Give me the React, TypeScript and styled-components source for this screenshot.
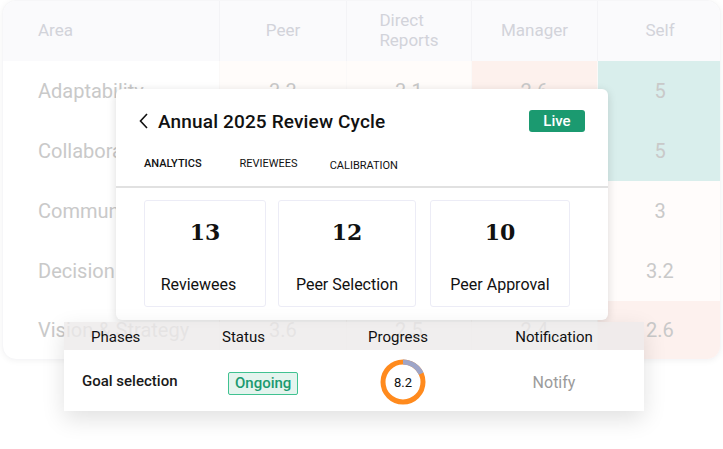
import React from 'react';
import styled, { createGlobalStyle } from 'styled-components';

const GlobalStyle = createGlobalStyle`
  html, body {
    margin: 0;
    padding: 0;
    background: #ffffff;
    font-family: Roboto, 'Liberation Sans', sans-serif;
  }
  * {
    box-sizing: border-box;
  }
`;

type Score = { value: string; tint?: string };
type Row = { area: string; scores: Score[] };

const rows: Row[] = [
  {
    area: 'Adaptability',
    scores: [
      { value: '3.3', tint: '#fffcfa' },
      { value: '3.1', tint: '#fffcfa' },
      { value: '2.6', tint: '#fdf1ed' },
      { value: '5', tint: '#d9eeec' },
    ],
  },
  {
    area: 'Collaboration',
    scores: [{ value: '3.4' }, { value: '3.3' }, { value: '3.0' }, { value: '5', tint: '#d9eeec' }],
  },
  {
    area: 'Communication',
    scores: [{ value: '3.2' }, { value: '3.0' }, { value: '2.9' }, { value: '3', tint: '#fffcfb' }],
  },
  {
    area: 'Decision Making',
    scores: [{ value: '3.1' }, { value: '2.8' }, { value: '2.7' }, { value: '3.2', tint: '#fffcfb' }],
  },
  {
    area: 'Vision & Strategy',
    scores: [{ value: '3.6' }, { value: '2.5' }, { value: '2.4' }, { value: '2.6', tint: '#fdf1ee' }],
  },
];

// shift > 0 pulls the label left (reference labels sit a bit off-centre)
const stats = [
  { value: 13, label: 'Reviewees', width: 122, offset: 0, shift: 13 },
  { value: 12, label: 'Peer Selection', width: 138, offset: 12, shift: 0 },
  { value: 10, label: 'Peer Approval', width: 140, offset: 14, shift: 0 },
];

const ProgressRing = ({ score }: { score: number }) => {
  const r = 20;
  const c = 2 * Math.PI * r;
  const rest = c * (1 - score / 10);
  return (
    <RingWrap>
      <svg width="46" height="46" viewBox="0 0 46 46">
        <circle cx="23" cy="23" r={r} fill="none" stroke="#ff8a1d" strokeWidth="5" />
        <circle
          cx="23"
          cy="23"
          r={r}
          fill="none"
          stroke="#9ea5c8"
          strokeWidth="5"
          strokeDasharray={`${rest} ${c}`}
          transform="rotate(-90 23 23)"
        />
      </svg>
      <RingLabel>{score}</RingLabel>
    </RingWrap>
  );
};

const App = () => {
  return (
    <Page>
      <GlobalStyle />
      <Board>
        <HeadCell $align="left">Area</HeadCell>
        <HeadCell>Peer</HeadCell>
        <HeadCell>
          Direct
          <br />
          Reports
        </HeadCell>
        <HeadCell>Manager</HeadCell>
        <HeadCell>Self</HeadCell>
        {rows.map((row, idx) => (
          <React.Fragment key={idx}>
            <AreaCell>{row.area}</AreaCell>
            {row.scores.map((s, i) => (
              <ScoreCell key={i} $tint={s.tint}>
                {s.value}
              </ScoreCell>
            ))}
          </React.Fragment>
        ))}
      </Board>

      <Panel>
        <PanelHead>
          <TitleRow>
            <Title>
              <svg width="12" height="18" viewBox="0 0 12 18">
                <path d="M9 2 L2.5 9 L9 16" fill="none" stroke="#111" strokeWidth="1.6" />
              </svg>
              Annual 2025 Review Cycle
            </Title>
            <LiveBadge>Live</LiveBadge>
          </TitleRow>
          <Tabs>
            <Tab $active>ANALYTICS</Tab>
            <Tab>REVIEWEES</Tab>
            <Tab $drop>CALIBRATION</Tab>
          </Tabs>
        </PanelHead>
        <StatRow>
          {stats.map((s) => (
            <StatCard key={s.label} $width={s.width} $offset={s.offset}>
              <StatValue>{s.value}</StatValue>
              <StatLabel $shift={s.shift}>{s.label}</StatLabel>
            </StatCard>
          ))}
        </StatRow>
      </Panel>

      <PhaseCard>
        <PhaseHead>
          <PhaseCell $pl={27}>Phases</PhaseCell>
          <PhaseCell $pl={22}>Status</PhaseCell>
          <PhaseCell $center $pr={10}>Progress</PhaseCell>
          <PhaseCell $center $pr={20}>Notification</PhaseCell>
        </PhaseHead>
        <PhaseBody>
          <PhaseCell $pl={18}>
            <PhaseName>Goal selection</PhaseName>
          </PhaseCell>
          <PhaseCell $pl={28}>
            <StatusBadge>Ongoing</StatusBadge>
          </PhaseCell>
          <PhaseCell $center>
            <ProgressRing score={8.2} />
          </PhaseCell>
          <PhaseCell $center $pr={20}>
            <NotifyText>Notify</NotifyText>
          </PhaseCell>
        </PhaseBody>
      </PhaseCard>
    </Page>
  );
};

export default App;

const Page = styled.div`
  position: relative;
  width: 723px;
  height: 449px;
  padding: 0 2px;
  overflow: hidden;
`;

const Board = styled.div`
  display: grid;
  grid-template-columns: 216px 127px 125px 126px 125px;
  grid-template-rows: 60px repeat(4, 60px) 58px;
  border-radius: 14px;
  overflow: hidden;
  background: #ffffff;
  box-shadow: 0 1px 6px rgba(0, 0, 0, 0.05);
  border: 1px solid #f6f6f8;
`;

const HeadCell = styled.div<{ $align?: string }>`
  display: flex;
  align-items: center;
  justify-content: ${(p) => (p.$align === 'left' ? 'flex-start' : 'center')};
  padding-left: ${(p) => (p.$align === 'left' ? '35px' : '0')};
  padding-bottom: 2px;
  background: #fafafc;
  border-left: 1px solid #f3f3f6;
  color: #d2d3da;
  font-size: 17px;
  line-height: 20px;
  text-align: left;

  &:first-child {
    border-left: none;
  }
`;

const AreaCell = styled.div`
  display: flex;
  align-items: center;
  padding-left: 35px;
  color: #c9c9c9;
  font-size: 20px;
  white-space: nowrap;
`;

const ScoreCell = styled.div<{ $tint?: string }>`
  display: flex;
  align-items: center;
  justify-content: center;
  background: ${(p) => p.$tint || '#ffffff'};
  color: #c9c9c9;
  font-size: 20px;
  border-left: 1px solid #fbf9f8;
`;

const Panel = styled.div`
  position: absolute;
  left: 116px;
  top: 89px;
  width: 492px;
  height: 231px;
  background: #ffffff;
  border-radius: 6px;
  box-shadow: 0 2px 10px rgba(0, 0, 0, 0.14);
  overflow: hidden;
`;

const PanelHead = styled.div`
  height: 99px;
  padding: 20px 22px 0 22px;
  border-bottom: 2px solid #e1e1e1;
`;

const TitleRow = styled.div`
  display: flex;
  align-items: center;
  justify-content: space-between;
  height: 24px;
`;

const Title = styled.div`
  display: flex;
  align-items: center;
  gap: 8px;
  color: #111111;
  font-size: 19px;
  font-weight: 500;
  letter-spacing: 0.15px;
`;

const LiveBadge = styled.div`
  width: 56px;
  height: 22px;
  margin-right: 1px;
  border-radius: 3px;
  background: #1b9a70;
  color: #ffffff;
  font-size: 15px;
  font-weight: 500;
  display: flex;
  align-items: center;
  justify-content: center;
`;

const Tabs = styled.div`
  display: flex;
  align-items: flex-start;
  gap: 38px;
  margin-top: 24px;
  padding-left: 6px;
`;

const Tab = styled.div<{ $active?: boolean; $drop?: boolean }>`
  color: #111111;
  font-size: 11px;
  font-weight: ${(p) => (p.$active ? 500 : 400)};
  margin-top: ${(p) => (p.$drop ? '2px' : '0')};
  margin-left: ${(p) => (p.$drop ? '-6px' : '0')};
`;

const StatRow = styled.div`
  display: flex;
  padding: 12px 0 0 28px;
`;

const StatCard = styled.div<{ $width: number; $offset: number }>`
  width: ${(p) => p.$width}px;
  margin-left: ${(p) => p.$offset}px;
  height: 107px;
  border: 1px solid #ececf6;
  border-radius: 3px;
  display: flex;
  flex-direction: column;
  align-items: center;
  padding-top: 18px;
`;

const StatValue = styled.div`
  font-family: 'DejaVu Serif', 'Liberation Serif', serif;
  font-weight: 700;
  font-size: 22px;
  color: #111111;
  line-height: 26px;
`;

const StatLabel = styled.div<{ $shift: number }>`
  margin-top: 30px;
  padding-right: ${(p) => p.$shift}px;
  font-size: 16px;
  color: #111111;
`;

const PhaseCard = styled.div`
  position: absolute;
  left: 64px;
  top: 322px;
  width: 580px;
  box-shadow: 0 8px 22px rgba(0, 0, 0, 0.12);
`;

const PhaseHead = styled.div`
  display: grid;
  grid-template-columns: 136px 122px 162px 160px;
  height: 28px;
  align-items: center;
  background: rgba(236, 234, 234, 0.8);
  color: #111111;
  font-size: 15px;
  padding-top: 1px;
`;

const PhaseBody = styled.div`
  display: grid;
  grid-template-columns: 136px 122px 162px 160px;
  height: 61px;
  align-items: center;
  background: #ffffff;
`;

const PhaseCell = styled.div<{ $pl?: number; $pr?: number; $center?: boolean }>`
  display: flex;
  align-items: center;
  justify-content: ${(p) => (p.$center ? 'center' : 'flex-start')};
  padding-left: ${(p) => p.$pl || 0}px;
  padding-right: ${(p) => p.$pr || 0}px;
`;

const PhaseName = styled.span`
  font-size: 15px;
  font-weight: 500;
  color: #1a1a1a;
`;

const StatusBadge = styled.span`
  margin-top: 6px;
  padding: 2px 6px;
  border: 1.5px solid #40c291;
  border-radius: 2px;
  background: #e4f4ee;
  color: #1b9a70;
  font-size: 15px;
  font-weight: 500;
  line-height: 17px;
`;

const NotifyText = styled.span`
  margin-top: 4px;
  font-size: 16px;
  color: #9b9b9b;
`;

const RingWrap = styled.div`
  position: relative;
  width: 46px;
  height: 46px;
  margin-top: 3px;
`;

const RingLabel = styled.span`
  position: absolute;
  inset: 0;
  display: flex;
  align-items: center;
  justify-content: center;
  font-size: 13px;
  color: #111111;
`;
